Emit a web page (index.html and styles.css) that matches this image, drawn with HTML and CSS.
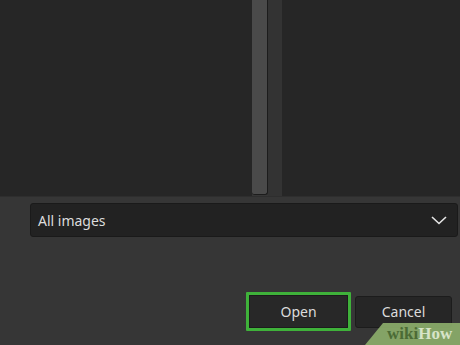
FILE: index.html
```html
<!DOCTYPE html>
<html lang="en">
<head>
    <meta charset="UTF-8">
    <title>Open file</title>
    <link rel="stylesheet" href="styles.css">
</head>
<body>

<div class="dialog">
    <div class="browser">
        <div class="pane"></div>
        <div class="scroll-thumb"></div>
        <div class="splitter"></div>
        <div class="pane grow"></div>
    </div>

    <div class="filter-row">
        <div class="select">
            <span class="select-text">All images</span>
            <svg class="chevron" width="16" height="9" viewBox="0 0 16 9">
                <path d="M1 1 L8 7.5 L15 1" fill="none" stroke="#e6e6e6" stroke-width="1.6"/>
            </svg>
        </div>
    </div>

    <div class="actions">
        <button class="button primary">Open</button>
        <button class="button">Cancel</button>
    </div>
</div>

<div class="watermark">
    <span class="wiki">wiki</span><span class="how">How</span>
</div>

</body>
</html>
```

FILE: styles.css
```css
* {
    font-family: "Noto Sans", "Open Sans", sans-serif;
    box-sizing: border-box;
}

body {
    background-color: #363636;
    margin: 0;
    width: 460px;
    height: 345px;
    overflow: hidden;
    position: relative;
}

.dialog {
    display: flex;
    flex-direction: column;
}

.browser {
    display: flex;
    height: 197px;
    border-bottom: 1px solid #2e2e2e;
}

.pane {
    width: 252px;
    background: #262626;
}

.pane.grow {
    flex: 1;
    width: auto;
}

.scroll-thumb {
    width: 16px;
    background: #4a4a4a;
    border-right: 1px solid #1c1c1c;
    border-bottom: 1px solid #1c1c1c;
    border-radius: 0 0 3px 3px;
    margin-bottom: 1px;
}

.splitter {
    width: 14px;
    background: #333333;
}

.filter-row {
    padding: 6px 2px 0 30px;
}

.select {
    display: flex;
    align-items: center;
    justify-content: space-between;
    height: 34px;
    padding: 0 7px 0 7px;
    background: #222222;
    border: 1px solid #1a1a1a;
    border-radius: 3px;
}

.select-text {
    color: #dcdcdc;
    font-size: 14px;
}

.chevron {
    display: block;
    margin-right: 3px;
}

.actions {
    display: flex;
    justify-content: flex-end;
    align-items: center;
    gap: 4px;
    padding: 55px 8px 0 0;
}

.button {
    font-size: 14px;
    color: #dcdcdc;
    background: #262626;
    border: 1px solid #1c1c1c;
    border-radius: 3px;
    height: 32px;
    width: 97px;
    padding: 0;
}

.button.primary {
    width: 105px;
    height: 39px;
    border: 3px solid #3fb23a;
    border-radius: 1px;
    box-shadow: inset 0 0 0 1px #1c1c1c;
    background: #282828;
}

.watermark {
    position: absolute;
    right: 0;
    bottom: 0;
    width: 95px;
    height: 22px;
    background: rgba(139, 172, 106, 0.92);
    clip-path: polygon(18px 0, 100% 0, 100% 100%, 0 100%);
    padding: 0 0 0 22px;
    line-height: 22px;
    font-family: "Liberation Serif", "DejaVu Serif", serif;
    font-weight: bold;
    font-size: 17px;
}

.watermark .wiki {
    font-family: "Liberation Serif", serif;
    color: #4b6b35;
}

.watermark .how {
    font-family: "Liberation Serif", serif;
    color: #d7e4c8;
}
```
